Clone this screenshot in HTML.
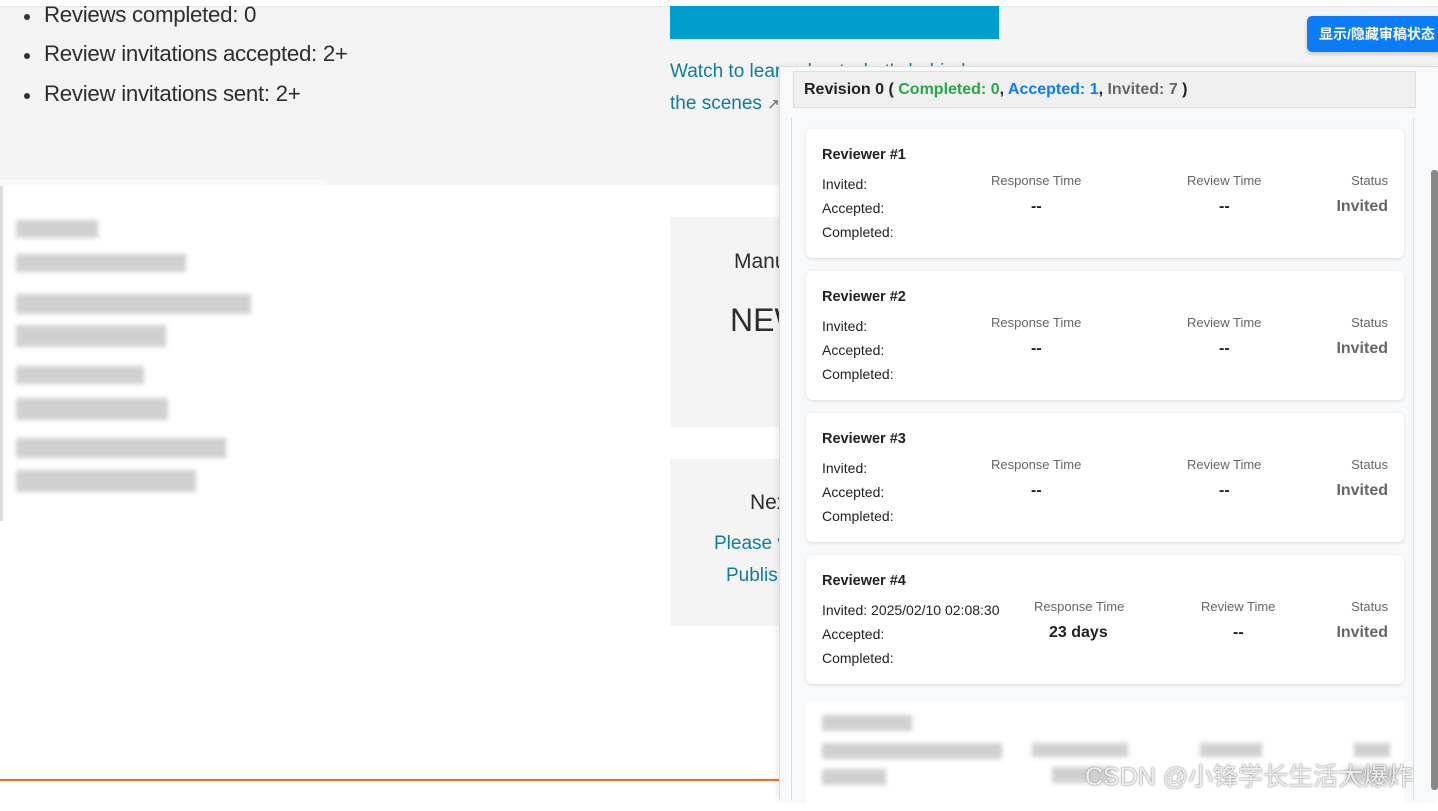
<!DOCTYPE html>
<html><head><meta charset="utf-8"><style>
*{margin:0;padding:0;box-sizing:border-box}
body{width:1438px;height:800px;overflow:hidden;background:#fff;position:relative;font-family:"Liberation Sans",sans-serif}
.ab{position:absolute}
.top{left:0;top:6px;width:1438px;height:179px;background:#f4f4f4;border-top:1px solid #e6e6e6}
.li{left:24px;font-size:22.3px;color:#2e2e2e;letter-spacing:-0.3px}
.li:before{content:"";position:absolute;left:0;top:12px;width:6px;height:6px;border-radius:50%;background:#333}
.li span{margin-left:20px}
.blk{background:#aaa;filter:blur(2.5px);opacity:.55}
.card{position:absolute;left:806px;width:598px;height:129px;background:#fff;border-radius:6px;box-shadow:0 1px 3px rgba(0,0,0,.12)}
.card .t{position:absolute;left:16px;top:18px;font-weight:bold;font-size:14.5px;color:#222}
.card .l{position:absolute;left:16px;font-size:14px;color:#222}
.card .h{position:absolute;top:44px;font-size:13px;color:#666}
.card .v{position:absolute;top:69px;font-size:16px;font-weight:bold;color:#222}
.card .s{position:absolute;top:69px;right:16px;font-size:16px;font-weight:bold;color:#666}
</style></head><body>
<div class="ab top"></div>
<div class="ab li" style="top:2px"><span>Reviews completed: 0</span></div>
<div class="ab li" style="top:41px"><span>Review invitations accepted: 2+</span></div>
<div class="ab li" style="top:81px"><span>Review invitations sent: 2+</span></div>
<div class="ab" style="left:670px;top:6px;width:329px;height:33px;background:#009ecf"></div>
<div class="ab" style="left:670px;top:56px;font-size:19px;color:#0c7d9d;line-height:32px">Watch to learn about what's behind<br>the scenes <span style="color:#666;font-size:15px">↗</span></div>
<div class="ab" style="left:0;top:180px;width:325px;height:6px;background:#fafafa"></div>
<div class="ab" style="left:0;top:186px;width:3px;height:335px;background:#ddd"></div>
<div class="ab blk" style="left:16px;top:220px;width:82px;height:18px"></div>
<div class="ab blk" style="left:16px;top:254px;width:170px;height:18px"></div>
<div class="ab blk" style="left:16px;top:294px;width:235px;height:20px"></div>
<div class="ab blk" style="left:16px;top:325px;width:150px;height:22px"></div>
<div class="ab blk" style="left:16px;top:366px;width:128px;height:18px"></div>
<div class="ab blk" style="left:16px;top:398px;width:152px;height:22px"></div>
<div class="ab blk" style="left:16px;top:438px;width:210px;height:20px"></div>
<div class="ab blk" style="left:16px;top:470px;width:180px;height:22px"></div>
<div class="ab" style="left:670px;top:217px;width:120px;height:210px;background:#f4f4f4"></div>
<div class="ab" style="left:734px;top:250px;font-size:21px;color:#2e2e2e">Manuscript</div>
<div class="ab" style="left:730px;top:302px;font-size:32px;color:#2e2e2e">NEW</div>
<div class="ab" style="left:670px;top:459px;width:120px;height:167px;background:#f4f4f4"></div>
<div class="ab" style="left:750px;top:491px;font-size:21px;color:#2e2e2e">Next</div>
<div class="ab" style="left:714px;top:533px;font-size:19px;color:#0c7d9d">Please visit</div>
<div class="ab" style="left:726px;top:565px;font-size:19px;color:#0c7d9d">Publishing</div>
<div class="ab" style="left:0;top:779px;width:790px;height:2px;background:#e9711c"></div>
<div class="ab" style="left:1307px;top:16px;width:135px;height:36px;background:#0a7cf7;border-radius:5px;box-shadow:0 2px 4px rgba(0,0,0,.2);color:#fff;font-size:14px;font-weight:bold;line-height:36px;padding-left:12px;white-space:nowrap;font-family:'Liberation Sans','Noto Sans CJK SC',sans-serif">显示/隐藏审稿状态</div>
<div class="ab" style="left:779px;top:66px;width:659px;height:734px;background:#f8f9fa;border-left:1px solid #ddd;border-top:1px solid #ddd;box-shadow:-2px 0 6px rgba(0,0,0,.08)"></div>
<div class="ab" style="left:791px;top:118px;width:1px;height:682px;background:#ddd"></div>
<div class="ab" style="left:1413px;top:118px;width:1px;height:682px;background:#ddd"></div>
<div class="ab" style="left:793px;top:71px;width:623px;height:37px;background:#f0f0f0;border:1px solid #ddd;font-size:16px;font-weight:bold;color:#222;line-height:35px;padding-left:10px">Revision 0 ( <span style="color:#28a745">Completed: 0</span>, <span style="color:#0a7cf7">Accepted: 1</span>, <span style="color:#666">Invited: 7</span> )</div>
<div class="ab" style="left:1431px;top:170px;width:7px;height:620px;background:#888;border-radius:3px"></div>
<div class="card" style="top:129px"><div class="t">Reviewer #1</div><div class="l" style="top:47px">Invited:</div><div class="l" style="top:71px">Accepted:</div><div class="l" style="top:95px">Completed:</div><div class="h" style="left:185px">Response Time</div><div class="v" style="left:225px">--</div><div class="h" style="left:381px">Review Time</div><div class="v" style="left:413px">--</div><div class="h" style="right:16px">Status</div><div class="s">Invited</div></div>
<div class="card" style="top:271px"><div class="t">Reviewer #2</div><div class="l" style="top:47px">Invited:</div><div class="l" style="top:71px">Accepted:</div><div class="l" style="top:95px">Completed:</div><div class="h" style="left:185px">Response Time</div><div class="v" style="left:225px">--</div><div class="h" style="left:381px">Review Time</div><div class="v" style="left:413px">--</div><div class="h" style="right:16px">Status</div><div class="s">Invited</div></div>
<div class="card" style="top:413px"><div class="t">Reviewer #3</div><div class="l" style="top:47px">Invited:</div><div class="l" style="top:71px">Accepted:</div><div class="l" style="top:95px">Completed:</div><div class="h" style="left:185px">Response Time</div><div class="v" style="left:225px">--</div><div class="h" style="left:381px">Review Time</div><div class="v" style="left:413px">--</div><div class="h" style="right:16px">Status</div><div class="s">Invited</div></div>
<div class="card" style="top:555px"><div class="t">Reviewer #4</div><div class="l" style="top:47px">Invited: 2025/02/10 02:08:30</div><div class="l" style="top:71px">Accepted:</div><div class="l" style="top:95px">Completed:</div><div class="h" style="left:228px">Response Time</div><div class="v" style="left:243px">23 days</div><div class="h" style="left:395px">Review Time</div><div class="v" style="left:427px">--</div><div class="h" style="right:16px">Status</div><div class="s">Invited</div></div>
<div class="card" style="top:701px;height:110px;box-shadow:none">
<div class="ab blk" style="left:16px;top:14px;width:90px;height:16px"></div>
<div class="ab blk" style="left:16px;top:42px;width:180px;height:16px"></div>
<div class="ab blk" style="left:226px;top:42px;width:96px;height:14px"></div>
<div class="ab blk" style="left:394px;top:42px;width:62px;height:14px"></div>
<div class="ab blk" style="left:548px;top:42px;width:36px;height:14px"></div>
<div class="ab blk" style="left:16px;top:68px;width:64px;height:16px"></div>
<div class="ab blk" style="left:246px;top:66px;width:60px;height:16px"></div>
<div class="ab blk" style="left:540px;top:66px;width:50px;height:16px"></div>
</div>
<div class="ab" style="left:1085px;top:757px;font-size:25px;color:rgba(255,255,255,.85);text-shadow:0 0 1px #888,0 0 2px #999;font-family:'Liberation Sans','Noto Sans CJK SC',sans-serif">CSDN @小锋学长生活大爆炸</div>
</body></html>
